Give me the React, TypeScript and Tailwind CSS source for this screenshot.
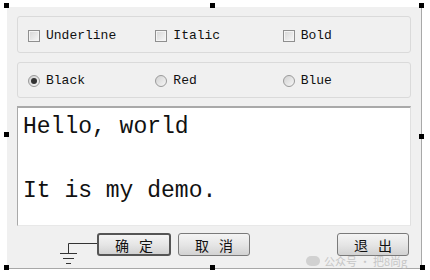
import React from 'react';

const mono = { fontFamily: '"Liberation Mono", "DejaVu Sans Mono", monospace' };
const cjk = { fontFamily: '"Noto Sans CJK SC", "Liberation Sans", sans-serif' };

function CheckBox({ label }: { label: string }) {
  return (
    <div className="flex items-center gap-[6px]">
      <span className="w-[12px] h-[12px] border border-[#8f8f8f] bg-gradient-to-br from-[#d6d6d6] to-[#f8f8f8] shadow-[inset_0_0_0_1px_#f4f4f4]" />
      <span className="text-[13px] text-[#111]" style={mono}>{label}</span>
    </div>
  );
}

function Radio({ label, checked }: { label: string; checked?: boolean }) {
  return (
    <div className="flex items-center gap-[6px]">
      <span className="w-[12px] h-[12px] rounded-full border border-[#9a9a9a] bg-gradient-to-br from-[#d2d2d2] to-[#f6f6f6] flex items-center justify-center">
        {checked && <span className="w-[6px] h-[6px] rounded-full bg-[#333]" />}
      </span>
      <span className="text-[13px] text-[#111]" style={mono}>{label}</span>
    </div>
  );
}

function Btn({ a, b, active }: { a: string; b: string; active?: boolean }) {
  return (
    <button
      className={`h-[23px] rounded-[3px] bg-gradient-to-b from-[#f4f4f4] via-[#e6e6e6] to-[#d2d2d2] text-[14px] text-[#111] leading-none flex items-center justify-center gap-[10px] ${
        active ? 'w-[74px] border-2 border-[#555]' : 'w-[72px] border border-[#7a7a7a]'
      }`}
      style={cjk}
    >
      <span>{a}</span>
      <span>{b}</span>
    </button>
  );
}

const handles = [
  [4, 3], [210, 3], [419, 3],
  [4, 132], [419, 134],
  [4, 265], [210, 265], [420, 265],
];

export default function App() {
  return (
    <div className="relative w-[430px] h-[280px] bg-white overflow-hidden">
      <div className="absolute left-[7px] top-[7px] w-[415px] h-[262px] bg-[#f0f0f0] border-r border-b border-[#a8a8a8] flex flex-col pt-[9px] px-[10px]">
        <div className="h-[37px] border border-[#dadada] rounded-[3px] grid grid-cols-3 items-center pl-[10px] pt-[2px]">
          <CheckBox label="Underline" />
          <CheckBox label="Italic" />
          <CheckBox label="Bold" />
        </div>
        <div className="mt-[9px] h-[36px] border border-[#dadada] rounded-[3px] grid grid-cols-3 items-center pl-[10px] pt-[2px]">
          <Radio label="Black" checked />
          <Radio label="Red" />
          <Radio label="Blue" />
        </div>
        <div
          className="mt-[8px] h-[120px] bg-white border-t-2 border-l border-[#a9a9a9] border-r border-r-[#e0e0e0] border-b border-b-[#e8e8e8] pl-[5px] pt-[3px] text-[23px] leading-[32px] text-[#111]"
          style={mono}
        >
          <div>Hello, world</div>
          <div>&nbsp;</div>
          <div>It is my demo.</div>
        </div>
        <div className="mt-[7px] flex items-center pl-[80px]">
          <Btn a="确" b="定" active />
          <div className="ml-[7px]">
            <Btn a="取" b="消" />
          </div>
          <div className="ml-auto mr-[2px]">
            <Btn a="退" b="出" />
          </div>
        </div>
      </div>

      <svg className="absolute left-0 top-0" width="430" height="280">
        <path d="M97 243.5 H68.5 V253" stroke="#333" strokeWidth="1" fill="none" />
        <path d="M60 253.5 H77 M63 258.5 H74 M66 263.5 H71" stroke="#333" strokeWidth="1" />
      </svg>

      {handles.map(([x, y], i) => (
        <span key={i} className="absolute w-[5px] h-[5px] bg-black" style={{ left: x, top: y }} />
      ))}

      <div className="absolute left-[306px] top-[255px] flex items-center gap-[4px] text-[11px] leading-[12px] text-[#bdbdbd] opacity-80" style={cjk}>
        <span className="w-[14px] h-[10px] rounded-full bg-[#cacaca]" />
        <span>公众号 · 把8尚g</span>
      </div>
    </div>
  );
}
